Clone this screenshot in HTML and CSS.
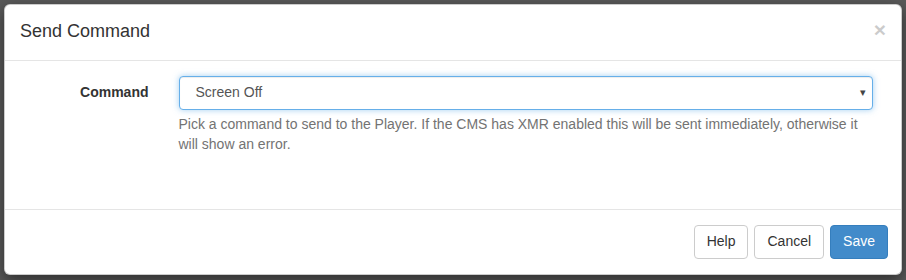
FILE: index.html
```html
<!DOCTYPE html>
<html lang="en">
<head>
<meta charset="utf-8">
<title>Send Command</title>
<link rel="stylesheet" href="styles.css">
</head>
<body>
<div class="backdrop">
  <div class="modal">
    <div class="modal-header">
      <h4 class="modal-title">Send Command</h4>
      <button class="close" type="button" aria-label="Close">&times;</button>
    </div>
    <div class="modal-body">
      <div class="form-group">
        <label class="control-label">Command</label>
        <div class="control-col">
          <div class="select">
            <span class="select-value">Screen Off</span>
            <span class="select-arrow">&#9662;</span>
          </div>
          <p class="help-block">Pick a command to send to the Player. If the CMS has XMR enabled this will be sent immediately, otherwise it will show an error.</p>
        </div>
      </div>
    </div>
    <div class="modal-footer">
      <button class="btn" type="button">Help</button>
      <button class="btn" type="button">Cancel</button>
      <button class="btn btn-primary" type="button">Save</button>
    </div>
  </div>
</div>
</body>
</html>
```
FILE: styles.css
```css
* { box-sizing: border-box; }
html, body {
  margin: 0;
  padding: 0;
  width: 906px;
  height: 280px;
  overflow: hidden;
  background: #5a5a5a;
  font-family: "Liberation Sans", Arial, sans-serif;
  font-size: 14px;
  line-height: 1.42857;
  color: #333;
}
.backdrop {
  padding: 4px 4px 0 4px;
  height: 280px;
  border-top: 3px solid #646464;
  margin-top: -3px;
}
.modal {
  width: 898px;
  background: #fff;
  border: 1px solid rgba(0,0,0,.2);
  border-radius: 6px;
  box-shadow: 0 5px 15px rgba(0,0,0,.5);
}
.modal-header {
  display: flex;
  align-items: center;
  justify-content: space-between;
  padding: 14px 15px 15px 15px;
  border-bottom: 1px solid #e5e5e5;
}
.modal-title {
  margin: 0;
  font-size: 18px;
  font-weight: normal;
  line-height: 1.42857;
  color: #333;
}
.close {
  padding: 0;
  margin: -4px 0 0 0;
  background: transparent;
  border: 0;
  font-family: "Liberation Sans", Arial, sans-serif;
  font-size: 21px;
  font-weight: bold;
  line-height: 1;
  color: #000;
  opacity: .2;
}
.modal-body {
  padding: 15px 0 29px 14px;
}
.form-group {
  display: grid;
  grid-template-columns: 144.5px 1fr;
  margin-bottom: 15px;
  width: 869px;
}
.control-label {
  padding: 7px 15px 0 15px;
  text-align: right;
  font-weight: bold;
  color: #333;
}
.control-col {
  padding: 0 15px;
}
.select {
  display: flex;
  align-items: center;
  justify-content: space-between;
  height: 34px;
  padding: 0 6px 0 16px;
  border: 1px solid #66afe9;
  border-radius: 4px;
  box-shadow: inset 0 1px 1px rgba(0,0,0,.075), 0 0 6px rgba(102,175,233,.6);
  color: #555;
  background: #fff;
}
.select-arrow {
  font-size: 11px;
  color: #444;
}
.help-block {
  margin: 5px 0 10px;
  color: #737373;
}
.modal-footer {
  display: flex;
  justify-content: flex-end;
  gap: 6px;
  padding: 15px 13px 15px 15px;
  border-top: 1px solid #e5e5e5;
}
.btn {
  height: 34px;
  padding: 6px 12px;
  font-family: "Liberation Sans", Arial, sans-serif;
  font-size: 14px;
  line-height: 1.42857;
  color: #333;
  background: #fff;
  border: 1px solid #ccc;
  border-radius: 4px;
}
.btn-primary {
  color: #fff;
  background: #428bca;
  border-color: #357ebd;
}
```
